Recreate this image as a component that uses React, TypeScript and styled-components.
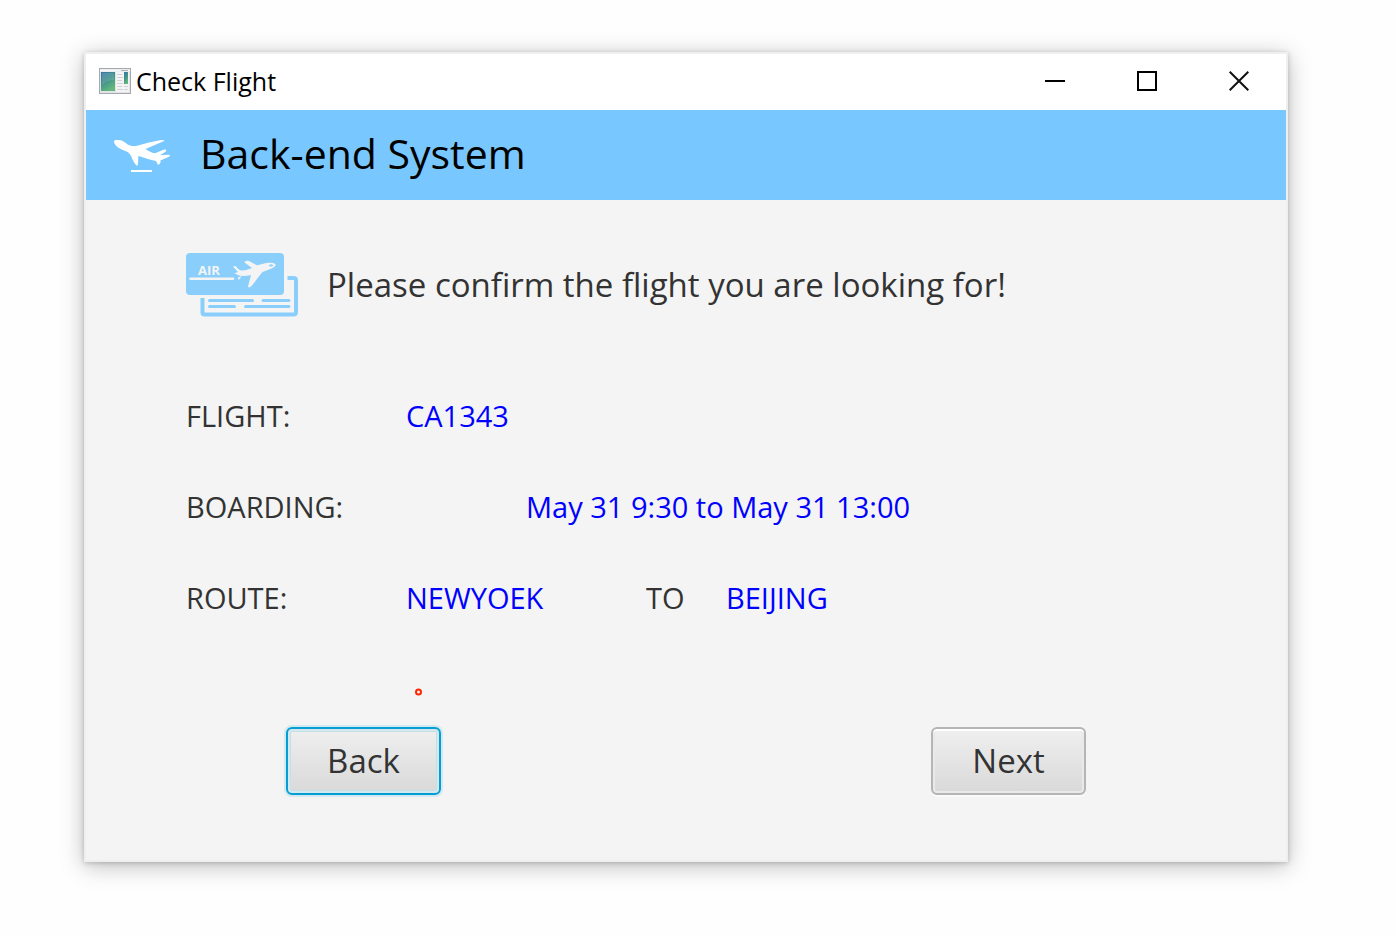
import React from "react";
import styled, { createGlobalStyle } from "styled-components";

const GlobalStyle = createGlobalStyle`
  *, *::before, *::after { box-sizing: border-box; }
  body {
    margin: 0;
    background: #fefefe;
    font-family: "Open Sans", "Noto Sans", sans-serif;
    font-variant-ligatures: none;
    color: #333;
  }
`;

const Desktop = styled.div`
  padding: 52px 108px 74px 84px;
`;

const AppWindow = styled.main`
  border: 2px solid #efefef;
  background: #f4f4f4;
  box-shadow: 0 4px 22px rgba(0, 0, 0, 0.26), 0 1px 5px rgba(0, 0, 0, 0.2);
`;

const TitleBar = styled.header`
  display: flex;
  align-items: center;
  height: 56px;
  padding: 0 1px 2px 13px;
  background: #fff;
  color: #000;
`;

const WindowTitle = styled.span`
  margin-left: 5px;
  font-size: 25px;
  line-height: 32px;
`;

const WindowControls = styled.div`
  display: flex;
  height: 100%;
  margin-left: auto;
`;

const ControlButton = styled.button`
  display: flex;
  align-items: center;
  justify-content: center;
  width: 92px;
  padding: 0;
  border: 0;
  background: transparent;
`;

const Banner = styled.div`
  display: flex;
  align-items: center;
  height: 90px;
  padding: 0 28px 4px;
  background: #78c8ff;
`;

const BannerTitle = styled.h1`
  margin: 0 0 0 30px;
  font-size: 41px;
  line-height: 56px;
  font-weight: 400;
  color: #000;
`;

const Content = styled.section`
  padding: 52px 100px 65px;
`;

const Prompt = styled.div`
  display: flex;
  align-items: center;
  gap: 28px;
`;

const PromptText = styled.h2`
  margin: 0;
  font-size: 33px;
  line-height: 48px;
  font-weight: 400;
`;

const Details = styled.dl`
  margin: 52px 0 0;
`;

const DetailRow = styled.div<{ $indent?: boolean }>`
  display: grid;
  grid-template-columns: ${(p) => (p.$indent ? "340px 1fr" : "220px 240px 80px 1fr")};
  align-items: center;
  height: 91px;
  font-size: 29px;
  line-height: 40px;
`;

const Label = styled.dt``;

const Value = styled.dd`
  margin: 0;
  color: #00f;
`;

const Marker = styled.svg`
  display: block;
  margin: 45px 0 31px 228px;
`;

const Actions = styled.div`
  display: flex;
  justify-content: space-between;
  padding: 0 100px;
`;

const ActionButton = styled.button<{ $focused?: boolean }>`
  width: 155px;
  height: 68px;
  padding: 0;
  border: 2px solid ${(p) => (p.$focused ? "#039ed3" : "#b5b5b5")};
  border-radius: 6px;
  background: linear-gradient(#efefef, #d9d9d9);
  box-shadow: ${(p) =>
    p.$focused
      ? "0 0 0 2px #d2e9f1, inset 0 0 0 2px #d5e8ee, inset 0 0 0 3px #c5dfe7"
      : "0 2px 0 #fafafa, inset 0 2px 0 #fff, inset 0 0 0 2px #e9e9e9"};
  color: #333;
  font-family: inherit;
  font-size: 33px;
  line-height: 48px;
`;

const AppIcon = () => (
  <svg width="32" height="26" viewBox="0 0 32 26" aria-hidden="true">
    <defs>
      <linearGradient id="screen" x1="0" y1="0" x2="0.5" y2="1">
        <stop offset="0" stopColor="#3a75a8" />
        <stop offset="0.5" stopColor="#3f918c" />
        <stop offset="1" stopColor="#63b77a" />
      </linearGradient>
    </defs>
    <rect x="0.5" y="0.5" width="31" height="25" fill="#e2e3e6" stroke="#a5a9ae" />
    <path d="M1 2.5h30" stroke="#f6f6f7" strokeWidth="2" />
    <rect x="17" y="4" width="13" height="20" fill="#f4f4f4" />
    <rect x="2" y="4" width="14" height="19" fill="url(#screen)" />
    <path d="M3 5h12v7q-7 0-12 5z" fill="#fff" opacity="0.12" />
    <path d="M18 6.500h5M18 9.500h6M18 12.500h5M18 15.500h6M18 18.500h5M18 21.500h6M25 18.500h4M25 21.500h4" stroke="#d0d2d5" />
    <rect x="25" y="4" width="4" height="12" fill="url(#screen)" />
    <path d="M22 2.500h7" stroke="#aeb4bc" />
  </svg>
);

const DepartingPlane = () => (
  <svg width="56" height="38" viewBox="0 -2 56 38" aria-hidden="true" fill="#fff">
    <path d="M0 6C0 4.500 1 4 2.500 4L6 4c2 .4 3.500 1.300 5 2.500 2 1.500 3.500 2.500 5 3 2.500.6 4.500.8 7 .2C31 7.500 39 5.500 47 4c2-.3 4.500 0 2.500 1.300L31.500 13c3 2 6 3.800 9.500 4.300l8.500-3.600c2-.5 3.800.2 2 2L46 19.300l8.500-.5c1.800 0 1.800 1.300.5 2L46.300 24.500c1 2-.5 3.700-2 4.200-1.300 0-1-2-2.300-3.700-6-1-12-3.300-17.700-5-.3 3.500.4 6.500-1 10-2.300-1.500-4.500-5.500-6-9.500-1.300-2.500-2.700-4-4.600-5C8 13.500 1 11 0 6z" />
    <rect x="17" y="34" width="21" height="2" />
  </svg>
);

const Tickets = () => (
  <svg width="113" height="66" viewBox="0 0 113 66" role="img" aria-label="Air tickets">
    <path d="M16.500 46v14.500q0 2 2 2h89q2.500 0 2.500-2.500V28q0-2-2.500-2h-6" fill="none" stroke="#8acffb" strokeWidth="4" />
    <rect x="0" y="1" width="98" height="42" rx="4" fill="#8acffb" />
    <path d="M23.500 48.500h43M77 48.500h26M23.500 54.500h25M59.500 54.500h43.500" stroke="#8acffb" strokeWidth="3" strokeLinecap="round" />
    <text x="12" y="23" fontFamily="Open Sans, sans-serif" fontSize="13" fontWeight="700" fill="#f4f4f4">
      AIR
    </text>
    <path d="M4.500 26.800h42.500" stroke="#f4f4f4" strokeWidth="2.600" strokeLinecap="round" />
    <path
      d="M47 14.500l2.500-.5c2 2 3 3.500 5.500 4.500 4 .3 7-1 11-2.500l-7.500-5.500c0-1.500 2-2 4-1.800L71 13.300c5-1 8-2.300 12-2.500 4-.2 7.500 1 6.500 2.700-2 3-7.500 4.300-13 6.500-4 4-7 10-12 15-1.500.6-2.500.5-2.500-.5l3-11.500c-5 1-9.500 1.600-13 0l-3.500-1.800 3.500-1.200z"
      fill="#f4f4f4"
    />
    <path d="M52 25.500l3.500-1.500-1.500 2.500-1.500 1.500z" fill="#f4f4f4" />
    <path d="M82.500 13l3.500-.7 1.500 1.400-3 1z" fill="#8acffb" />
  </svg>
);

export default function App() {
  return (
    <>
      <GlobalStyle />
      <Desktop>
        <AppWindow>
          <TitleBar>
            <AppIcon />
            <WindowTitle>Check Flight</WindowTitle>
            <WindowControls>
              <ControlButton type="button" aria-label="Minimize">
                <svg width="20" height="20" viewBox="0 0 20 20">
                  <path d="M0 10h20" stroke="#000" strokeWidth="2" />
                </svg>
              </ControlButton>
              <ControlButton type="button" aria-label="Maximize">
                <svg width="20" height="20" viewBox="0 0 20 20">
                  <rect x="1" y="1" width="18" height="18" fill="none" stroke="#000" strokeWidth="2" />
                </svg>
              </ControlButton>
              <ControlButton type="button" aria-label="Close">
                <svg width="20" height="20" viewBox="0 0 20 20">
                  <path d="M.7.7l18.600 18.600M19.300.7L.7 19.300" stroke="#111" strokeWidth="2" />
                </svg>
              </ControlButton>
            </WindowControls>
          </TitleBar>
          <Banner>
            <DepartingPlane />
            <BannerTitle>Back-end System</BannerTitle>
          </Banner>
          <Content>
            <Prompt>
              <Tickets />
              <PromptText>Please confirm the flight you are looking for!</PromptText>
            </Prompt>
            <Details>
              <DetailRow>
                <Label>FLIGHT:</Label>
                <Value>CA1343</Value>
              </DetailRow>
              <DetailRow $indent>
                <Label>BOARDING:</Label>
                <Value>May 31 9:30 to May 31 13:00</Value>
              </DetailRow>
              <DetailRow>
                <Label>ROUTE:</Label>
                <Value>NEWYOEK</Value>
                <Label>TO</Label>
                <Value>BEIJING</Value>
              </DetailRow>
            </Details>
            <Marker width="8" height="8" viewBox="0 0 8 8" aria-hidden="true">
              <circle cx="4.500" cy="4" r="2.500" fill="none" stroke="#ff2600" strokeWidth="2" />
            </Marker>
            <Actions>
              <ActionButton type="button" $focused>
                Back
              </ActionButton>
              <ActionButton type="button">Next</ActionButton>
            </Actions>
          </Content>
        </AppWindow>
      </Desktop>
    </>
  );
}
